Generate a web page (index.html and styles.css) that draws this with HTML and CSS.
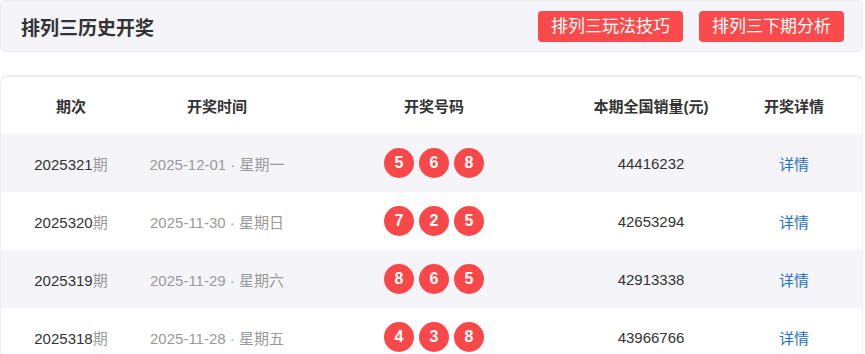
FILE: index.html
```html
<!DOCTYPE html>
<html lang="zh">
<head>
<meta charset="utf-8">
<link rel="stylesheet" href="styles.css">
</head>
<body>
<div class="page">
  <header class="topbar">
    <h1 class="title">排列三历史开奖</h1>
    <div class="actions">
      <a class="btn">排列三玩法技巧</a>
      <a class="btn">排列三下期分析</a>
    </div>
  </header>
  <section class="card">
    <div class="row head">
      <div class="c1">期次</div>
      <div class="c2">开奖时间</div>
      <div class="c3">开奖号码</div>
      <div class="c4">本期全国销量(元)</div>
      <div class="c5">开奖详情</div>
    </div>
    <div class="row alt">
      <div class="c1">2025321<span class="muted">期</span></div>
      <div class="c2 muted">2025-12-01 · 星期一</div>
      <div class="c3 balls"><span class="ball">5</span><span class="ball">6</span><span class="ball">8</span></div>
      <div class="c4">44416232</div>
      <div class="c5"><a class="link">详情</a></div>
    </div>
    <div class="row">
      <div class="c1">2025320<span class="muted">期</span></div>
      <div class="c2 muted">2025-11-30 · 星期日</div>
      <div class="c3 balls"><span class="ball">7</span><span class="ball">2</span><span class="ball">5</span></div>
      <div class="c4">42653294</div>
      <div class="c5"><a class="link">详情</a></div>
    </div>
    <div class="row alt">
      <div class="c1">2025319<span class="muted">期</span></div>
      <div class="c2 muted">2025-11-29 · 星期六</div>
      <div class="c3 balls"><span class="ball">8</span><span class="ball">6</span><span class="ball">5</span></div>
      <div class="c4">42913338</div>
      <div class="c5"><a class="link">详情</a></div>
    </div>
    <div class="row">
      <div class="c1">2025318<span class="muted">期</span></div>
      <div class="c2 muted">2025-11-28 · 星期五</div>
      <div class="c3 balls"><span class="ball">4</span><span class="ball">3</span><span class="ball">8</span></div>
      <div class="c4">43966766</div>
      <div class="c5"><a class="link">详情</a></div>
    </div>
  </section>
</div>
</body>
</html>
```
FILE: styles.css
```css
* { box-sizing: border-box; }
html, body { margin: 0; padding: 0; background: #fff; }
body {
  font-family: "Liberation Sans", "Noto Sans CJK SC", sans-serif;
  color: #333;
  font-size: 15px;
  overflow: hidden;
}
.page { width: 865px; }
.topbar {
  width: 863px;
  height: 52px;
  background: #f5f5f9;
  border: 1px solid #ececf0;
  border-radius: 6px;
  display: flex;
  align-items: center;
  justify-content: space-between;
  padding: 0 18px 0 20px;
}
.title {
  margin: 0;
  font-size: 19px;
  font-weight: bold;
  color: #333;
}
.actions { display: flex; gap: 16px; }
.btn {
  display: block;
  height: 31px;
  line-height: 31px;
  padding: 0 13px;
  background: #fa4a4c;
  color: #fff;
  font-size: 17px;
  border-radius: 4px;
}
.card {
  margin-top: 23px;
  width: 863px;
  border-top: 2px solid #efeff2;
  border-left: 1px solid #efeff2;
  border-right: 1px solid #efeff2;
  border-radius: 8px 8px 0 0;
}
.row {
  display: flex;
  align-items: center;
  height: 58px;
  text-align: center;
}
.row.head { height: 57px; font-weight: bold; }
.row.alt { background: #f5f5f9; }
.c1 { width: 140px; }
.c2 { width: 152px; }
.c3 { width: 282px; }
.c4 { width: 152px; }
.c5 { width: 134px; }
.muted { color: #999; }
.balls { display: flex; justify-content: center; gap: 5px; }
.ball {
  width: 30px;
  height: 30px;
  border-radius: 50%;
  background: #f94849;
  color: #fff;
  font-weight: bold;
  font-size: 16px;
  line-height: 30px;
  text-align: center;
}
.link { color: #1e6fc8; font-size: 15px; }
```
